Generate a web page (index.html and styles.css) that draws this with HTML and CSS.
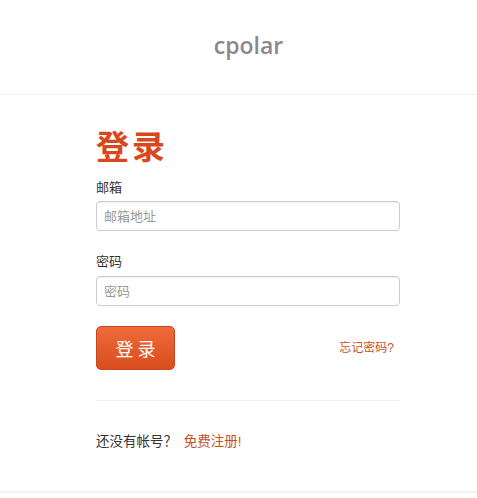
FILE: index.html
```html
<!DOCTYPE html>
<html lang="zh">
<head>
<meta charset="utf-8">
<link rel="stylesheet" href="styles.css">
</head>
<body>
<header class="top">
  <div class="brand">cpolar</div>
</header>
<main class="wrap">
  <h1 class="title">登录</h1>
  <form class="form">
    <label class="label">邮箱</label>
    <input class="field" type="text" placeholder="邮箱地址">
    <label class="label label-2">密码</label>
    <input class="field" type="password" placeholder="密码">
    <div class="actions">
      <button class="btn" type="button">登录</button>
      <a class="forgot" href="#">忘记密码?</a>
    </div>
  </form>
  <div class="rule"></div>
  <p class="signup">还没有帐号？ <a href="#">免费注册!</a></p>
</main>
<div class="foot"></div>
</body>
</html>
```
FILE: styles.css
```css
* { box-sizing: border-box; }
html, body { margin: 0; padding: 0; background: #fff; }
body {
  font-family: "Liberation Sans", "Noto Sans CJK SC", sans-serif;
  color: #333;
  font-size: 14px;
}
.top {
  height: 95px;
  border-bottom: 1px solid #f0f0f0;
  display: flex;
  justify-content: center;
  align-items: center;
}
.brand {
  font-family: "Open Sans", sans-serif;
  font-weight: 600;
  font-size: 23px;
  color: #8a8a8a;
  margin-top: -4px;
  margin-left: 20px;
}
.wrap {
  width: 304px;
  margin: 0 0 0 96px;
  padding-top: 26px;
}
.title {
  margin: 0;
  font-family: "Noto Sans CJK SC", sans-serif;
  font-weight: 700;
  font-size: 33px;
  line-height: 48px;
  letter-spacing: 3px;
  color: #d9481c;
}
.form { display: flex; flex-direction: column; }
.label {
  font-size: 13px;
  line-height: 20px;
  margin-top: 9px;
  margin-bottom: 3px;
  color: #333;
}
.label-2 { margin-top: 21px; margin-bottom: 4px; }
.field {
  height: 30px;
  width: 304px;
  border: 1px solid #ccc;
  border-radius: 4px;
  padding: 0 7px;
  font-family: "Liberation Sans", "Noto Sans CJK SC", sans-serif;
  font-size: 13px;
  color: #555;
  box-shadow: inset 0 1px 1px rgba(0,0,0,0.06);
}
.field::placeholder { color: #999; }
.actions {
  margin-top: 20px;
  display: flex;
  justify-content: space-between;
  align-items: center;
}
.btn {
  width: 79px;
  height: 44px;
  border: 1px solid #c9461c;
  border-radius: 5px;
  background: linear-gradient(#ef6a3a, #d94d1e);
  color: #fff;
  font-family: "Noto Sans CJK SC", sans-serif;
  font-size: 18px;
  letter-spacing: 4px;
  padding: 0 0 0 4px;
}
.forgot {
  color: #c7511f;
  text-decoration: none;
  font-size: 12px;
  margin-right: 6px;
  margin-top: -4px;
}
.rule {
  margin-top: 30px;
  border-top: 1px solid #f2f2f2;
}
.signup {
  margin: 31px 0 0;
  font-size: 13.5px;
  line-height: 20px;
  color: #333;
}
.signup a { color: #c7511f; text-decoration: none; margin-left: 3px; }
.foot {
  margin-top: 39px;
  border-top: 2px solid #f4f4f4;
  height: 20px;
  background: #fff;
}
```
